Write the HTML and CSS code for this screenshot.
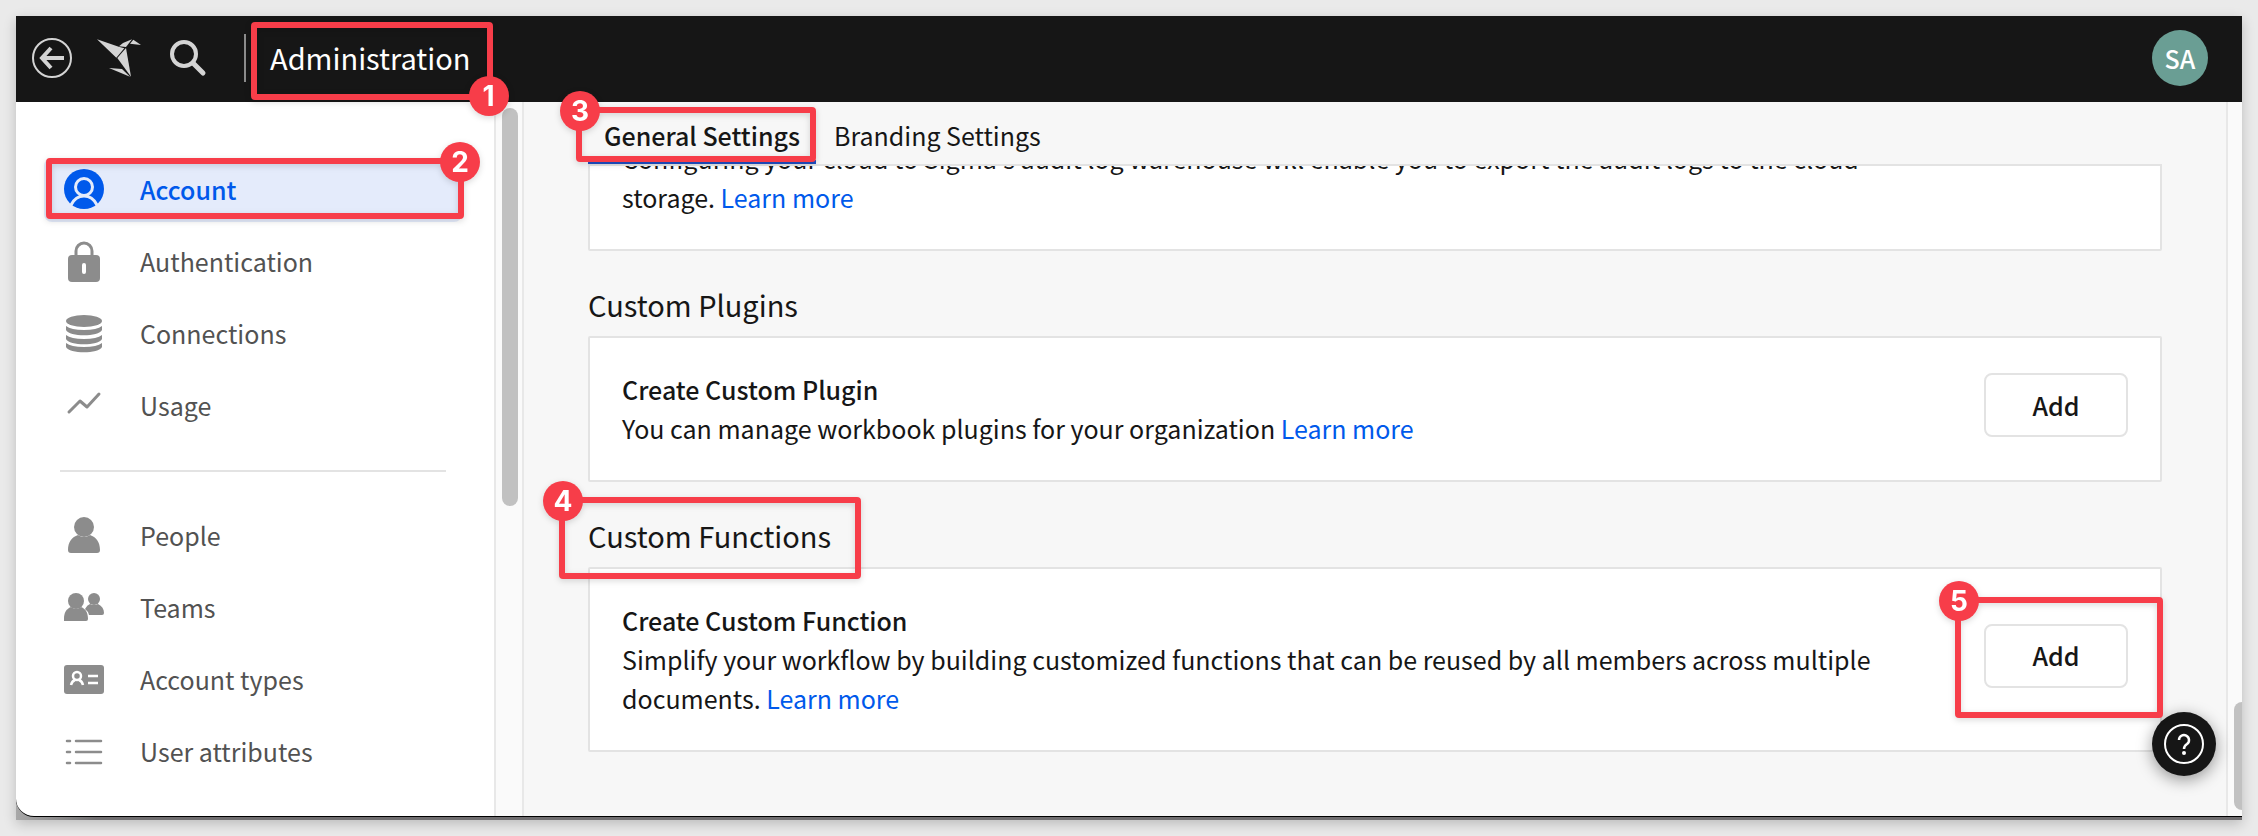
FILE: index.html
```html
<!DOCTYPE html>
<html lang="en">
<head>
    <meta charset="UTF-8">
    <meta name="viewport" content="width=device-width, initial-scale=1.0">
    <title>Administration</title>
    <link rel="stylesheet" href="styles.css">
</head>
<body>
    <div class="frame">
        <div class="window">
            <header class="topbar">
                <button class="icon-btn" aria-label="Back">
                    <svg width="40" height="40" viewBox="0 0 40 40" fill="none" stroke="#d4d4d4">
                        <circle cx="20" cy="20" r="19" stroke-width="2"/>
                        <path d="M32 20H10M19 10L10 20l9 10" stroke-width="4"/>
                    </svg>
                </button>
                <a class="logo" href="#" aria-label="Home">
                    <svg width="44" height="40" viewBox="0 0 44 40" fill="#d4d4d4">
                        <path d="M0 1.3l21.7 7.4 5.6 1.6-8 9.4z"/>
                        <path d="M22 8.3l4-3.3 9-3.7-6 7.7z"/>
                        <path d="M36.3 1.7l7.7 5.3-11-1.3z"/>
                        <path d="M29 10l5 28.7-13.7-18.7z"/>
                        <path d="M12 30l13 1 8 7.7z"/>
                    </svg>
                </a>
                <button class="icon-btn" aria-label="Search">
                    <svg width="40" height="40" viewBox="0 0 40 40" fill="none" stroke="#d4d4d4">
                        <circle cx="16" cy="16" r="12" stroke-width="4"/>
                        <path d="M25 25l10 10" stroke-width="5" stroke-linecap="round"/>
                    </svg>
                </button>
                <h1 class="title">Administration
                    <span class="mark mark-title"><span class="num">1</span></span>
                </h1>
                <button class="avatar">SA</button>
            </header>

            <div class="body">
                <nav class="sidebar">
                    <a class="item active" href="#">
                        <svg class="icon" viewBox="0 0 40 40">
                            <circle cx="20" cy="20" r="20" fill="#0059eb"/>
                            <g fill="none" stroke="#e4ebfb" stroke-width="3">
                                <circle cx="20" cy="18" r="8.5"/>
                                <path d="M7 36c3-6 7-9 13-9s10 3 13 9"/>
                            </g>
                        </svg>
                        Account
                        <span class="mark mark-account"><span class="num">2</span></span>
                    </a>
                    <a class="item" href="#">
                        <svg class="icon" viewBox="0 0 40 40">
                            <path d="M12 16V10a8 8 0 0 1 16 0v6" fill="none" stroke="#8c8c8c" stroke-width="3"/>
                            <rect x="4" y="14" width="32" height="27" rx="4" fill="#8c8c8c"/>
                            <rect x="18" y="22" width="4" height="11" rx="2" fill="#fff"/>
                        </svg>
                        Authentication
                    </a>
                    <a class="item" href="#">
                        <svg class="icon" viewBox="0 0 40 40" fill="#8c8c8c">
                            <ellipse cx="20" cy="8" rx="18" ry="6"/>
                            <path d="M2 13q5 4 18 4t18-4v4c-3 7-33 7-36 0z"/>
                            <path d="M2 22q5 4 18 4t18-4v4c-3 7-33 7-36 0z"/>
                            <path d="M2 30q5 4 18 4t18-4v4c-3 7-33 7-36 0z"/>
                        </svg>
                        Connections
                    </a>
                    <a class="item" href="#">
                        <svg class="icon" viewBox="0 0 40 40" fill="none" stroke="#8c8c8c" stroke-width="3" stroke-linecap="round" stroke-linejoin="round">
                            <path d="M5 27l11-11 7 6L35 9"/>
                        </svg>
                        Usage
                    </a>
                    <hr class="divider">
                    <a class="item" href="#">
                        <svg class="icon" viewBox="0 0 40 40" fill="#8c8c8c">
                            <circle cx="20" cy="12" r="10"/>
                            <path d="M14 20q6 4 12 0c6 2 10 7 10 15q0 3-3 3H7q-3 0-3-3c0-8 4-13 10-15z"/>
                        </svg>
                        People
                    </a>
                    <a class="item" href="#">
                        <svg class="icon" viewBox="0 0 40 40" fill="#8c8c8c">
                            <circle cx="12" cy="14" r="8"/>
                            <path d="M7 20q5 4 10 0c5 2 7 6 7 12q0 2-2 2H0V32c0-6 2-10 7-12z"/>
                            <circle cx="30" cy="12" r="6"/>
                            <path d="M26 17q4 2 8 0c4 2 6 5 6 9q0 2-2 2H25q-1-4-4-6 2-4 5-5z"/>
                        </svg>
                        Teams
                    </a>
                    <a class="item" href="#">
                        <svg class="icon" viewBox="0 0 40 40">
                            <rect y="6" width="40" height="29" rx="3" fill="#8c8c8c"/>
                            <g fill="none" stroke="#fff" stroke-width="2.5">
                                <circle cx="13" cy="17" r="4"/>
                                <path d="M7 26q1-4 4-5M19 26q-1-4-4-5M24 17h10M24 24h10"/>
                            </g>
                        </svg>
                        Account types
                    </a>
                    <a class="item" href="#">
                        <svg class="icon" viewBox="0 0 40 40" fill="none" stroke="#8c8c8c" stroke-width="2.5" stroke-linecap="round">
                            <path d="M3 10h3M12 10h25M3 21h3M12 21h25M3 32h3M12 32h25"/>
                        </svg>
                        User attributes
                    </a>
                </nav>
                <div class="scroll"><div class="thumb"></div></div>

                <main class="main">
                    <div class="tabs">
                        <button class="tab selected">General Settings
                            <span class="mark mark-tab"><span class="num">3</span></span>
                        </button>
                        <button class="tab">Branding Settings</button>
                    </div>
                    <div class="content">
                        <section class="card first">
                            <p>Configuring your cloud to Sigma's audit log warehouse will enable you to export the audit logs to the cloud storage. <a href="#">Learn more</a></p>
                        </section>

                        <h2 class="heading">Custom Plugins</h2>
                        <section class="card">
                            <div>
                                <h3>Create Custom Plugin</h3>
                                <p>You can manage workbook plugins for your organization <a href="#">Learn more</a></p>
                            </div>
                            <div class="action"><button class="add">Add</button></div>
                        </section>

                        <h2 class="heading"><span class="anchor">Custom Functions
                            <span class="mark mark-functions"><span class="num">4</span></span></span>
                        </h2>
                        <section class="card">
                            <div>
                                <h3>Create Custom Function</h3>
                                <p>Simplify your workflow by building customized functions that can be reused by all members across multiple documents. <a href="#">Learn more</a></p>
                            </div>
                            <div class="action">
                                <button class="add">Add</button>
                                <span class="mark mark-add"><span class="num">5</span></span>
                            </div>
                        </section>
                    </div>
                </main>
                <div class="scroll page-scroll"><div class="thumb"></div></div>
            </div>
        </div>

        <button class="help" aria-label="Help">
            <svg width="40" height="40" viewBox="0 0 40 40" fill="none" stroke="#fff">
                <circle cx="20" cy="20" r="19" stroke-width="2"/>
                <path d="M15 16a5 5 0 1 1 8 4q-3 2-3 5" stroke-width="2.5"/>
                <circle cx="20" cy="29" r="2" fill="#fff" stroke="none"/>
            </svg>
        </button>
    </div>
</body>
</html>
```
FILE: styles.css
```css
* {
    box-sizing: border-box;
    margin: 0;
    padding: 0;
}

body {
    background-color: #eaeaea;
    padding: 16px;
    min-height: 100vh;
    display: flex;
    font-family: "Noto Sans CJK SC", "Noto Sans", sans-serif;
    font-size: 25px;
    line-height: 39px;
    color: #161616;
}

a {
    color: #0059eb;
    text-decoration: none;
}

button {
    font: inherit;
    color: inherit;
    background: none;
    border: none;
    cursor: pointer;
}

svg {
    display: block;
}

.frame {
    position: relative;
    flex: 1;
    display: flex;
    padding-bottom: 3px;
    background: linear-gradient(to right, #a8a8a8, #706e70 80px);
    box-shadow: 0 4px 12px rgba(0, 0, 0, 0.2);
}

.window {
    flex: 1;
    min-width: 0;
    display: flex;
    flex-direction: column;
    border-bottom: 1px solid #000;
    border-radius: 0 0 0 18px;
    background-color: #fff;
}

/* top bar */
.topbar {
    display: flex;
    align-items: center;
    height: 86px;
    padding: 0 34px 2px 16px;
    background-color: #161616;
    color: #fff;
}

.logo {
    margin: 0 27px 0 25px;
}

.title {
    position: relative;
    margin-left: 36px;
    padding: 0 0 2px 24px;
    border-left: 2px solid #8c8c8c;
    font-size: 29px;
    font-weight: 400;
    line-height: 46px;
}

.avatar {
    width: 56px;
    height: 56px;
    margin-left: auto;
    border-radius: 50%;
    background-color: #6a9e94;
    font-weight: 500;
}

/* layout */
.body {
    flex: 1;
    display: flex;
    min-height: 0;
}

.sidebar {
    width: 478px;
    padding: 56px 32px 28px 28px;
    display: flex;
    flex-direction: column;
    gap: 8px;
}

.item {
    position: relative;
    display: flex;
    align-items: center;
    gap: 36px;
    height: 64px;
    padding: 0 20px 2px;
    border-radius: 8px;
    color: #525252;
}

.item.active {
    background-color: #e4ebfb;
    color: #0059eb;
    font-weight: 500;
}

.icon {
    width: 40px;
    height: 40px;
    overflow: visible;
}

.divider {
    margin: 24px 16px;
    border: none;
    border-top: 2px solid #e3e3e3;
}

.scroll {
    width: 30px;
    padding: 6px;
    border-left: 2px solid #e8e8e8;
    border-right: 2px solid #e8e8e8;
    background-color: #fafafa;
}

.thumb {
    width: 16px;
    height: 398px;
    border-radius: 8px;
    background-color: #c1c1c1;
}

.page-scroll {
    display: flex;
    align-items: flex-end;
    width: 16px;
    padding-right: 0;
    border-right: none;
}

.page-scroll .thumb {
    width: 8px;
    height: 108px;
    border-radius: 8px 0 0 8px;
}

.main {
    flex: 1;
    min-width: 0;
    display: flex;
    flex-direction: column;
    background-color: #f7f7f7;
}

.tabs {
    display: flex;
    gap: 2px;
    margin: 0 64px;
    padding-top: 4px;
    border-bottom: 2px solid #e3e3e3;
}

.tab {
    position: relative;
    height: 58px;
    padding: 4px 16px 0;
    border-bottom: 4px solid transparent;
}

.tab.selected {
    border-color: #1f4fc4;
    font-weight: 500;
}

.content {
    flex: 1;
    padding: 0 64px 64px;
    overflow: hidden;
}

.heading {
    padding: 33px 0 12px;
    font-size: 29px;
    font-weight: 400;
    line-height: 40px;
}

.card {
    display: grid;
    grid-template-columns: 1fr 144px;
    gap: 40px;
    padding: 32px;
    border: 2px solid #e3e3e3;
    border-radius: 2px;
    background-color: #fff;
}

/* scrolled under the tabs */
.card.first {
    margin-top: -61px;
}

.card h3 {
    font-size: 25px;
    font-weight: 500;
}

.action {
    position: relative;
    align-self: center;
    margin-bottom: 8px;
}

.add {
    display: block;
    width: 100%;
    height: 64px;
    border: 2px solid #e3e3e3;
    border-radius: 8px;
    font-weight: 500;
}

.help {
    position: absolute;
    right: 26px;
    bottom: 44px;
    width: 64px;
    height: 64px;
    display: grid;
    place-items: center;
    border-radius: 50%;
    background-color: #161616;
    box-shadow: 0 4px 16px rgba(0, 0, 0, 0.4);
}

/* numbered callouts */
.anchor {
    position: relative;
    display: inline-block;
}

.mark {
    position: absolute;
    z-index: 2;
    border: 6px solid #f73d49;
    border-radius: 4px;
    filter: drop-shadow(0 2px 3px rgba(0, 0, 0, 0.15));
}

.num {
    position: absolute;
    width: 40px;
    height: 40px;
    border-radius: 50%;
    background-color: #f73d49;
    color: #fff;
    font-family: Inter, sans-serif;
    font-size: 28px;
    font-weight: 700;
    line-height: 40px;
    text-align: center;
}

.mark-title {
    inset: -12px -22px -18px 5px;
}

.mark-title .num,
.mark-account .num {
    right: -22px;
}

.mark-title .num {
    bottom: -22px;
}

.mark-account {
    inset: 0 -2px 3px 2px;
}

.mark-account .num {
    top: -22px;
}

.mark-tab {
    inset: 1px 0 -2px -12px;
}

.mark-functions {
    inset: -18px -30px -24px -29px;
}

.mark-tab .num,
.mark-functions .num,
.mark-add .num {
    left: -22px;
    top: -22px;
}

.mark-add {
    inset: -27px -35px -30px -29px;
}
```
